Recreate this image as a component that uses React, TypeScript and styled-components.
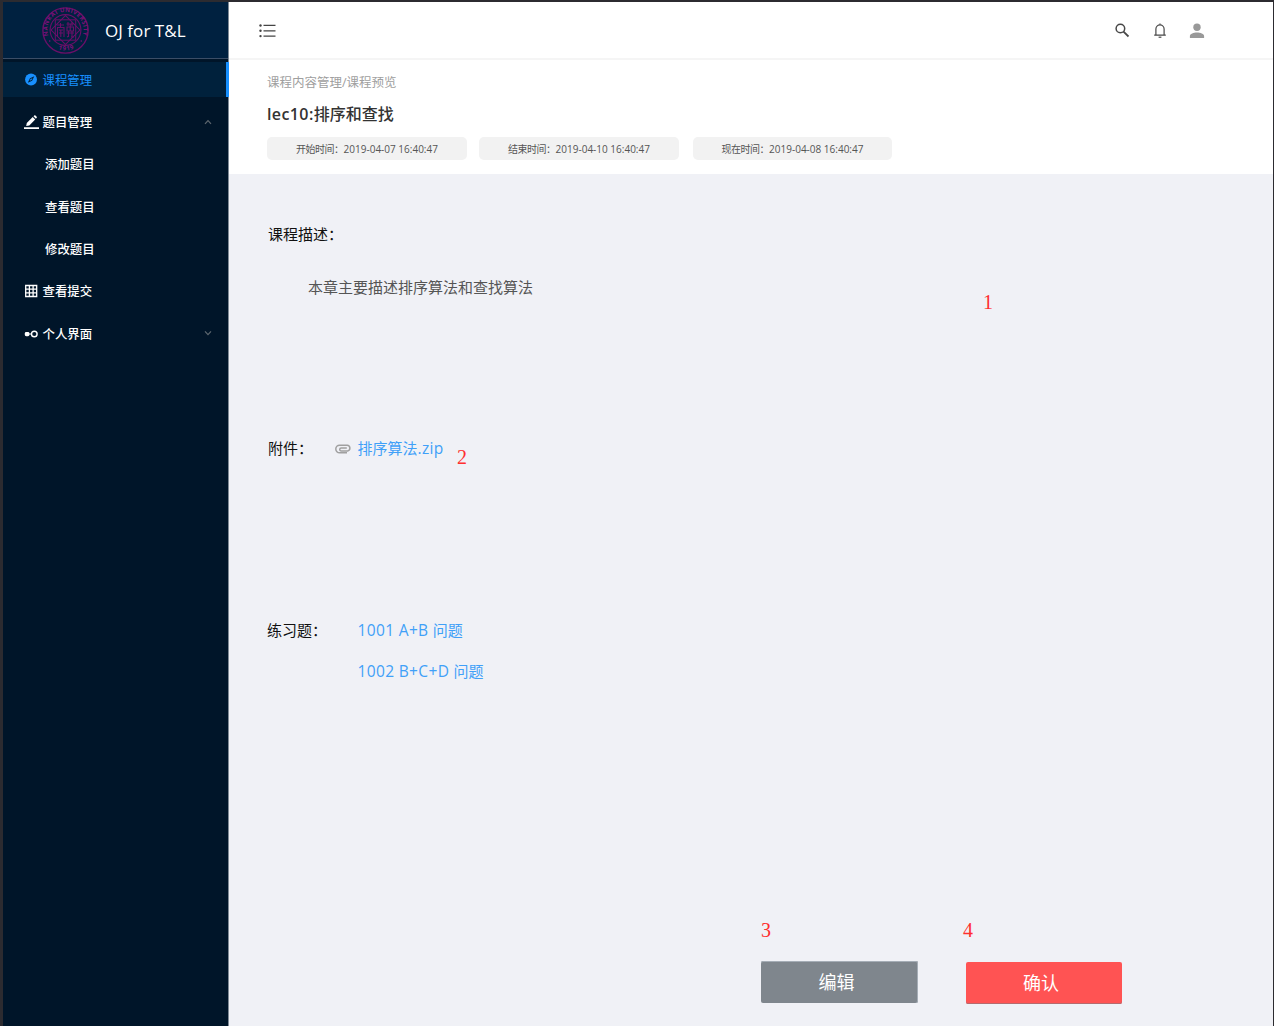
import React from 'react';
import styled, { createGlobalStyle } from 'styled-components';

const GlobalStyle = createGlobalStyle`
  * { box-sizing: border-box; }
  body { margin: 0; background: #f0f1f6; }
  p, h1 { margin: 0; }
`;

const Frame = styled.div`
  display: flex;
  height: 1026px;
  overflow: hidden;
  border: solid #2c2b30;
  border-width: 2px 1px 0 3px;
  background: #f0f1f6;
  font-family: 'Open Sans', 'Noto Sans CJK SC', sans-serif;
`;

const Sidebar = styled.aside`
  flex: 0 0 226px;
  background: #001529;
  border-right: 1px solid #7f8a96;
`;

const Brand = styled.div`
  display: flex;
  align-items: center;
  height: 57px;
  padding-left: 38px;
  gap: 15px;
  background: #002140;
  border-bottom: 1px solid #3b4d66;
`;

const BrandName = styled.span`
  padding-top: 1px;
  color: #fff;
  font-size: 17px;
  line-height: 24px;
  letter-spacing: 0.05px;
`;

const Menu = styled.nav`
  padding-top: 3px;
`;

const MenuItem = styled.div<{ $active?: boolean; $nested?: boolean; $height?: number }>`
  display: flex;
  align-items: center;
  height: ${(p) => p.$height ?? 42}px;
  padding-left: ${(p) => (p.$nested ? 42 : 21)}px;
  padding-right: ${(p) => (p.$active ? 0 : 16.5)}px;
  margin-right: ${(p) => (p.$active ? -1 : 0)}px;
  margin-bottom: ${(p) => (p.$active ? 4 : 0)}px;
  border-right: ${(p) => (p.$active ? '3px solid #1890ff' : '0')};
  background: ${(p) => (p.$active ? '#00213c' : 'transparent')};
  color: ${(p) => (p.$active ? '#1890ff' : '#fff')};
  font-size: 12.4px;
  font-weight: ${(p) => (p.$active ? 400 : 500)};
  line-height: 20px;
`;

const MenuText = styled.span`
  padding-top: 2px;
`;

const MenuIcon = styled.span`
  display: flex;
  align-items: center;
  flex: 0 0 18.5px;
`;

const MenuArrow = styled.span`
  display: flex;
  margin-left: auto;
`;

const Main = styled.main`
  position: relative;
  flex: 1;
  display: flex;
  flex-direction: column;
`;

const TopBar = styled.header`
  display: flex;
  align-items: center;
  height: 58px;
  padding: 1px 68px 0 29px;
  background: #fff;
  border-bottom: 2px solid #f5f5f5;
`;

const Tools = styled.div`
  display: flex;
  align-items: center;
  gap: 21.5px;
  margin-left: auto;
`;

const PageHead = styled.section`
  height: 113.5px;
  padding: 13px 0 0 38px;
  background: #fff;
`;

const Breadcrumb = styled.p`
  color: #a0a0a0;
  font-size: 12.5px;
  line-height: 20px;
`;

const Title = styled.h1`
  margin-top: 9px;
  color: #333;
  font-size: 16px;
  font-weight: 500;
  line-height: 24px;
`;

const TitlePrefix = styled.span`
  font-weight: 600;
  letter-spacing: 0.4px;
`;

const Chips = styled.div`
  display: grid;
  grid-template-columns: 200px 200px 199px;
  margin-top: 11px;
  column-gap: 13px;
`;

const Chip = styled.div<{ $shift: number }>`
  height: 23px;
  margin-left: ${(p) => p.$shift}px;
  margin-right: ${(p) => -p.$shift}px;
  border-radius: 5px;
  background: #f2f2f2;
  color: #555;
  font-size: 10px;
  line-height: 24px;
  text-align: center;
  white-space: nowrap;
`;

const ChipLabel = styled.span`
  letter-spacing: -0.5px;
`;

const Content = styled.section`
  padding: 45.5px 0 0 38px;
  color: #111;
  font-size: 15px;
  line-height: 30px;
`;

const Label = styled.p<{ $width?: number; $indent?: number }>`
  width: ${(p) => (p.$width ? `${p.$width}px` : 'auto')};
  padding-left: ${(p) => p.$indent ?? 0}px;
`;

const Description = styled.p`
  margin: 23px 0 0 41px;
  color: #555;
`;

const Row = styled.div<{ $top: number }>`
  display: flex;
  margin-top: ${(p) => p.$top}px;
`;

const Clip = styled.span`
  display: flex;
  align-items: center;
  width: 22.5px;
  padding-top: 2px;
`;

const Links = styled.div`
  display: flex;
  flex-direction: column;
  gap: 11px;
`;

const Link = styled.a<{ $spacing?: number }>`
  color: #40a0f8;
  span {
    font-size: 15.5px;
    letter-spacing: ${(p) => p.$spacing ?? 0.35}px;
  }
`;

const Actions = styled.div`
  display: flex;
  gap: 48px;
  margin: 275px 0 0 494px;
`;

const Button = styled.button<{ $color: string; $edge: string; $drop?: number; $width: number }>`
  width: ${(p) => p.$width}px;
  height: 42px;
  margin-top: ${(p) => p.$drop ?? 0}px;
  padding: 0 6px 0 0;
  border: 0;
  border-radius: 2px;
  background: ${(p) => p.$color};
  box-shadow: ${(p) => p.$edge};
  color: #fff;
  font-family: inherit;
  font-size: 18px;
  line-height: 38px;
`;

const Marker = styled.span<{ $x: number; $y: number }>`
  position: absolute;
  left: ${(p) => p.$x}px;
  top: ${(p) => p.$y}px;
  color: #ff2f2f;
  font-family: 'Liberation Serif', serif;
  font-size: 20px;
  line-height: 20px;
`;

const Crest = () => (
  <svg width="49" height="50" viewBox="0 0 49 50" fill="none" stroke="#6b0f68">
    <defs>
      <path id="crest-top" d="M 7.4 30.6 A 18 18 0 1 1 41.6 30.6" />
      <path id="crest-bottom" d="M 8 37 A 20.4 20.4 0 0 0 41 37" />
    </defs>
    <circle cx="24.5" cy="25.5" r="22.6" strokeWidth="1.4" />
    <circle cx="24.5" cy="25" r="15.4" strokeWidth="1.1" />
    <rect x="14.3" y="14.8" width="20.4" height="20.4" strokeWidth="1" />
    <rect x="14.3" y="14.8" width="20.4" height="20.4" strokeWidth="1" transform="rotate(45 24.5 25)" />
    <g fill="#7d1078" stroke="none" fontFamily="Open Sans, sans-serif" fontWeight="700">
      <text fontSize="6">
        <textPath href="#crest-top" textLength="67">NANKAI UNIVERSITY</textPath>
      </text>
      <text fontSize="6">
        <textPath href="#crest-bottom" startOffset="31%" textLength="16">1919</textPath>
      </text>
      <circle cx="8.7" cy="36" r="0.8" />
      <circle cx="40.3" cy="36" r="0.8" />
    </g>
    <path
      strokeWidth="1.1"
      d="M16 20h7M19.5 18v4M16.5 32V22.5h6.5V32M18 25h4M18 28h4M19.8 24.5V32M25.5 19h7M27 17v4M31 17v4M26 22h6.5v4H26zM29.2 19v7M25.5 28h7.5M27.5 26v6M31 26v6M26 32l2-1M30 32h3"
    />
  </svg>
);

const CompassIcon = () => (
  <svg width="13" height="13" viewBox="0 0 24 24">
    <circle cx="13" cy="12" r="11" fill="#1890ff" />
    <path d="M19 6 15 14.5 7 18 11 9.5Z" fill="#00213c" />
    <path d="M15.5 9.5 12 11l-1.5 3.5L14 13Z" fill="#1890ff" />
  </svg>
);

const PenIcon = () => (
  <svg width="15" height="15" viewBox="0 0 15 15" fill="#fff">
    <path d="M0 12.2h15v1.8H0zM2.2 10.9l.6-3L8.7 2l2.5 2.5-5.9 5.9zM9.5 1.3l.8-.9c.3-.3.8-.3 1.1 0l1.3 1.3c.3.3.3.8 0 1.1l-.8.9z" />
  </svg>
);

const GridIcon = () => (
  <svg width="14" height="14" viewBox="0 0 14 14" fill="none" stroke="#fff" strokeWidth="1.3">
    <path d="M1.7 1.5h11v11h-11zM5.4 1v12M9.1 1v12M1 5.2h12M1 8.9h12" />
  </svg>
);

const DotsIcon = () => (
  <svg width="15" height="10" viewBox="0 0 15 10">
    <rect x="0.8" y="3" width="4.6" height="4.2" rx="1.4" fill="#fff" />
    <path d="M5 5h3" stroke="#fff" strokeWidth="1" />
    <circle cx="10.3" cy="5" r="2.8" fill="none" stroke="#fff" strokeWidth="1.4" />
  </svg>
);

const Chevron = ({ up }: { up?: boolean }) => (
  <svg width="8" height="8" viewBox="0 0 8 8" fill="none" stroke="#5d676f" strokeWidth="1.2">
    <path d={up ? 'M1 5.8 4 2.6 7 5.8' : 'M1 1.4 4 4.6 7 1.4'} />
  </svg>
);

const ListIcon = () => (
  <svg width="19" height="16" viewBox="0 0 19 16" fill="#444">
    <path d="M5.5 1.8h12v1.3h-12zM5.5 7.2h12v1.3h-12zM5.5 12.5h12v1.3h-12z" />
    <circle cx="2.5" cy="2.5" r="1.2" />
    <circle cx="2.5" cy="7.8" r="1.2" />
    <circle cx="2.5" cy="13.1" r="1.2" />
  </svg>
);

const SearchIcon = () => (
  <svg width="16" height="16" viewBox="0 0 16 16" fill="none" stroke="#484848">
    <circle cx="6.4" cy="5.5" r="4.3" strokeWidth="1.5" />
    <path d="m9.5 8.7 5 4.8" strokeWidth="1.8" />
  </svg>
);

const BellIcon = () => (
  <svg width="16" height="16" viewBox="0 0 16 16" fill="none" stroke="#484848" strokeWidth="1.2">
    <path d="M2.2 12.2h11.6M3.9 12.2V6a4.1 4.1 0 0 1 8.2 0v6.2M8 .6v1.5" />
    <path d="M6.6 14.2h2.8" />
  </svg>
);

const UserIcon = () => (
  <svg width="16" height="16" viewBox="0 0 16 16" fill="#999">
    <circle cx="8" cy="4.2" r="3.7" />
    <path d="M.9 15.1v-2.1C.9 10.6 4.6 9.4 8 9.4s7.1 1.2 7.1 3.6v2.1z" />
  </svg>
);

const ClipIcon = () => (
  <svg width="16" height="10" viewBox="0 0 16 10" fill="none" stroke="#a0a0a0" strokeWidth="1.5">
    <path d="M12.8 6.9H6.2a1.5 1.5 0 0 1 0-3h5.6M4.6 8.8a3.8 3.8 0 0 1 0-7.6h7.6a2.9 2.9 0 0 1 .5 5.7M4.4 8.8h7.6" />
  </svg>
);

const times = [
  { label: '开始时间：', value: '2019-04-07 16:40:47', shift: 0 },
  { label: '结束时间：', value: '2019-04-10 16:40:47', shift: -1 },
  { label: '现在时间：', value: '2019-04-08 16:40:47', shift: 0 },
];

const markers = [
  { n: 1, x: 754, y: 290 },
  { n: 2, x: 228, y: 445 },
  { n: 3, x: 532, y: 918 },
  { n: 4, x: 734, y: 918 },
];

export default function App() {
  return (
    <Frame>
      <GlobalStyle />
      <Sidebar>
        <Brand>
          <Crest />
          <BrandName>OJ for T&amp;L</BrandName>
        </Brand>
        <Menu>
          <MenuItem $active $height={35}>
            <MenuIcon><CompassIcon /></MenuIcon>
            <MenuText>课程管理</MenuText>
          </MenuItem>
          <MenuItem>
            <MenuIcon><PenIcon /></MenuIcon>
            <MenuText>题目管理</MenuText>
            <MenuArrow><Chevron up /></MenuArrow>
          </MenuItem>
          <MenuItem $nested><MenuText>添加题目</MenuText></MenuItem>
          <MenuItem $nested $height={43}><MenuText>查看题目</MenuText></MenuItem>
          <MenuItem $nested><MenuText>修改题目</MenuText></MenuItem>
          <MenuItem>
            <MenuIcon><GridIcon /></MenuIcon>
            <MenuText>查看提交</MenuText>
          </MenuItem>
          <MenuItem $height={43}>
            <MenuIcon><DotsIcon /></MenuIcon>
            <MenuText>个人界面</MenuText>
            <MenuArrow><Chevron /></MenuArrow>
          </MenuItem>
        </Menu>
      </Sidebar>
      <Main>
        <TopBar>
          <ListIcon />
          <Tools>
            <SearchIcon />
            <BellIcon />
            <UserIcon />
          </Tools>
        </TopBar>
        <PageHead>
          <Breadcrumb>课程内容管理/课程预览</Breadcrumb>
          <Title><TitlePrefix>lec10:</TitlePrefix>排序和查找</Title>
          <Chips>
            {times.map((t) => (
              <Chip key={t.label} $shift={t.shift}><ChipLabel>{t.label}</ChipLabel>{t.value}</Chip>
            ))}
          </Chips>
        </PageHead>
        <Content>
          <Label $indent={1}>课程描述：</Label>
          <Description>本章主要描述排序算法和查找算法</Description>
          <Row $top={131}>
            <Label $width={68} $indent={1}>附件：</Label>
            <Clip><ClipIcon /></Clip>
            <Link $spacing={0.3}>排序算法<span>.zip</span></Link>
          </Row>
          <Row $top={152}>
            <Label $width={90.5}>练习题：</Label>
            <Links>
              <Link><span>1001 A+B </span>问题</Link>
              <Link><span>1002 B+C+D </span>问题</Link>
            </Links>
          </Row>
          <Actions>
            <Button $width={157} $color="#7f868d" $edge="inset 0 1px #a5adb6, inset -1px 0 #a5adb6">编辑</Button>
            <Button $width={156} $drop={1} $color="#ff5353" $edge="inset 0 -1px #b56a6e">确认</Button>
          </Actions>
        </Content>
        {markers.map((m) => (
          <Marker key={m.n} $x={m.x} $y={m.y}>{m.n}</Marker>
        ))}
      </Main>
    </Frame>
  );
}
